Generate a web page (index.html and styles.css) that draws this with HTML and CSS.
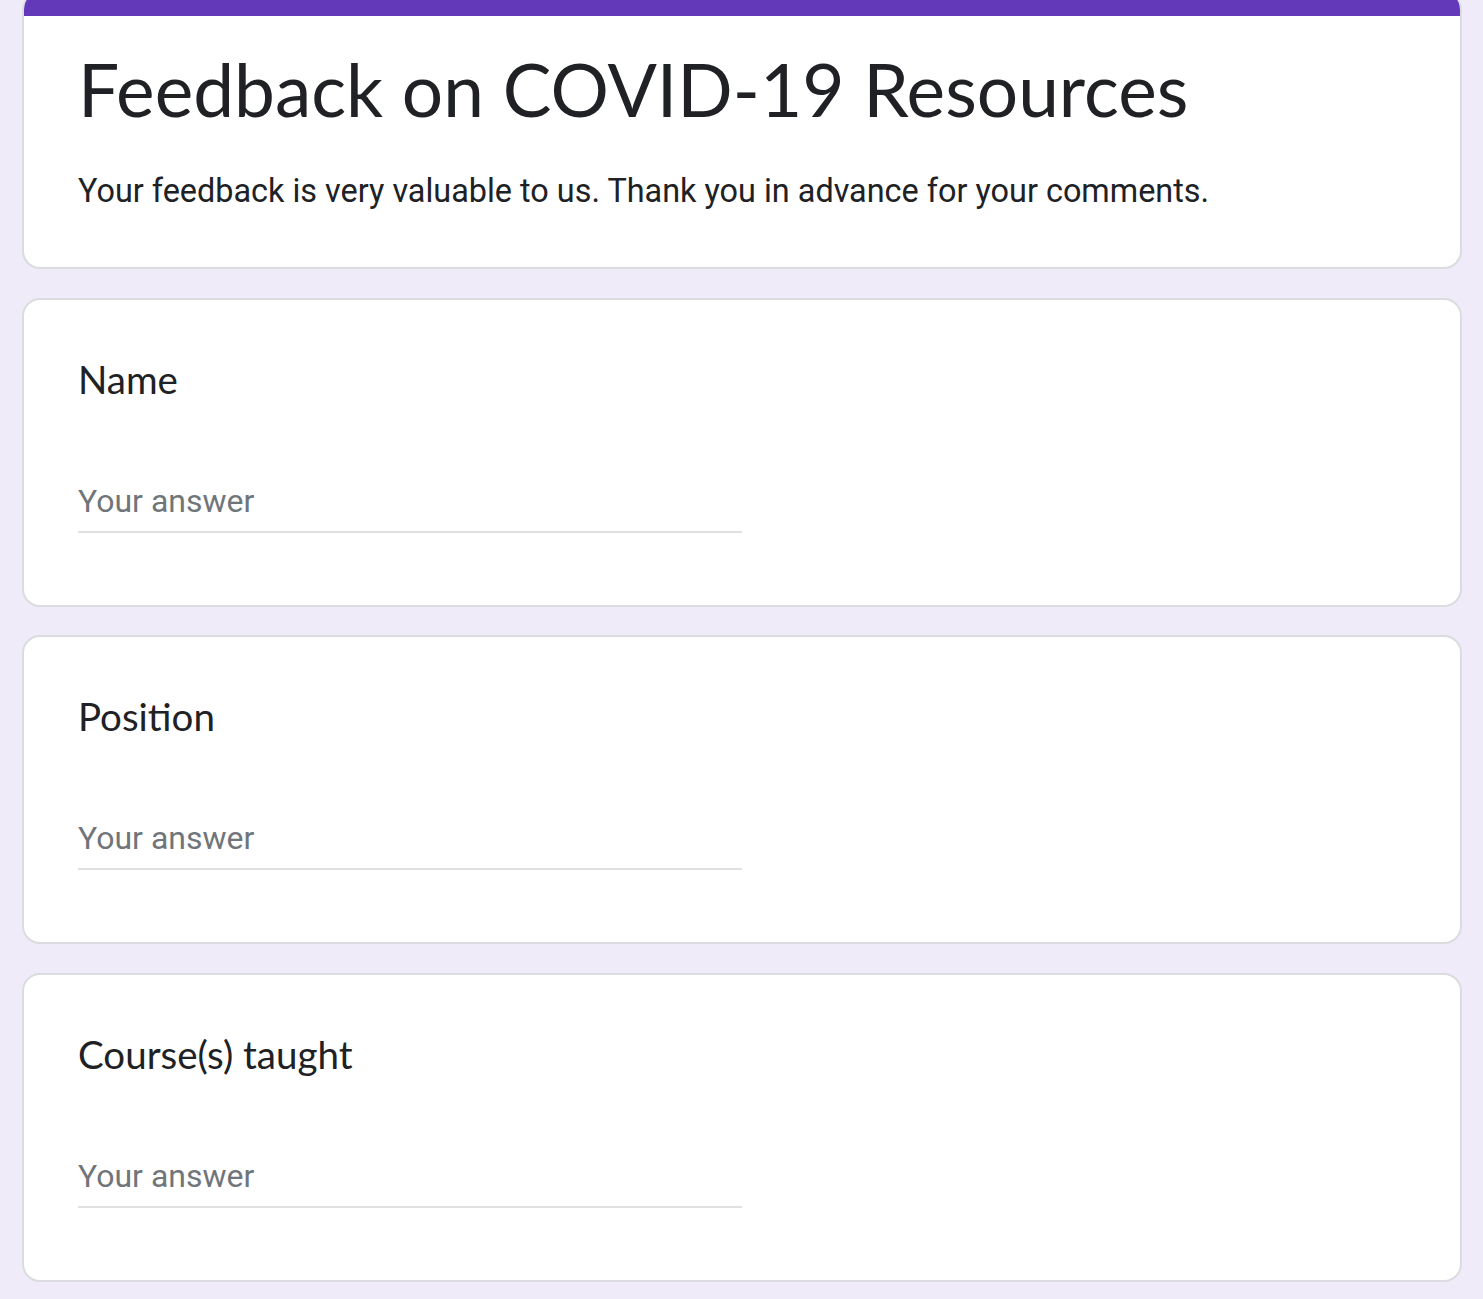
FILE: index.html
```html
<!DOCTYPE html>
<html>
<head>
<meta charset="utf-8">
<title>Feedback on COVID-19 Resources</title>
<link rel="stylesheet" href="styles.css">
</head>
<body>
<div class="page">
  <div class="card title-card">
    <div class="title-bar"></div>
    <div class="title-body">
      <h1 class="form-title">Feedback on COVID-19 Resources</h1>
      <p class="form-desc">Your feedback is very valuable to us. Thank you in advance for your comments.</p>
    </div>
  </div>
  <div class="card question">
    <div class="q-title">Name</div>
    <div class="answer"><span class="placeholder">Your answer</span></div>
  </div>
  <div class="card question">
    <div class="q-title">Position</div>
    <div class="answer"><span class="placeholder">Your answer</span></div>
  </div>
  <div class="card question">
    <div class="q-title">Course(s) taught</div>
    <div class="answer"><span class="placeholder">Your answer</span></div>
  </div>
</div>
</body>
</html>
```

FILE: styles.css
```css
html, body {
  margin: 0;
  padding: 0;
  background: #efebf8;
}
body {
  overflow: hidden;
}
.page {
  width: 1440px;
  margin-left: 22px;
  margin-top: -8px;
  display: flex;
  flex-direction: column;
  gap: 28.5px;
}
.card {
  background: #ffffff;
  border: 2px solid #dadce0;
  border-radius: 18px;
  box-sizing: border-box;
  overflow: hidden;
}
.title-card {
  border-top: none;
  height: 277px;
}
.title-bar {
  height: 24px;
  background: #6339b9;
}
.title-body {
  padding: 0 54px;
}
.form-title {
  margin: 0;
  padding-top: 28px;
  font-family: "Lato", "Open Sans", sans-serif;
  font-weight: 400;
  font-size: 73px;
  line-height: 90px;
  color: #202124;
}
.form-desc {
  margin: 0;
  padding-top: 35px;
  font-family: "Roboto", sans-serif;
  font-size: 32.4px;
  line-height: 44px;
  color: #202124;
}
.question {
  height: 309px;
  padding: 51px 54px 0;
}
.q-title {
  font-family: "Lato", "Open Sans", sans-serif;
  font-size: 38.5px;
  line-height: 56px;
  color: #202124;
}
.answer {
  width: 664px;
  margin-top: 72px;
  border-bottom: 2px solid #e0e0e0;
  padding-bottom: 8px;
}
.placeholder {
  font-family: "Roboto", sans-serif;
  font-size: 32px;
  line-height: 44px;
  color: #70757a;
}
```
